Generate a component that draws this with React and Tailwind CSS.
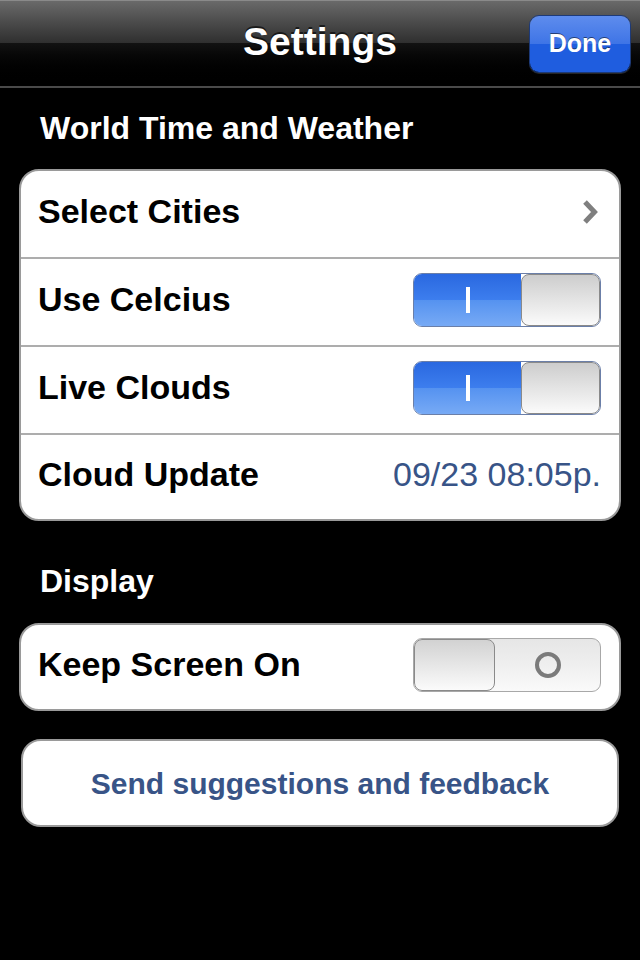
import React from "react";

const font = { fontFamily: '"Liberation Sans", Arial, Helvetica, sans-serif' };

function SwitchOn() {
  return (
    <div className="flex h-[54px] w-[188px] overflow-hidden rounded-[9px] border border-[#6b7fa8]">
      <div className="flex w-[107px] flex-col">
        <div className="flex h-1/2 items-end justify-center bg-gradient-to-b from-[#2a68e0] to-[#3d7eee]">
          <div className="h-[13px] w-[4px] bg-white" />
        </div>
        <div className="flex h-1/2 items-start justify-center bg-gradient-to-b from-[#5592f0] to-[#77aaf5]">
          <div className="h-[13px] w-[4px] bg-white" />
        </div>
      </div>
      <div className="flex-1 rounded-[8px] border border-[#8a8a8a] bg-gradient-to-b from-[#cdcdcd] to-[#fbfbfb]" />
    </div>
  );
}

function SwitchOff() {
  return (
    <div className="flex h-[54px] w-[188px] overflow-hidden rounded-[9px] border border-[#a8a8a8] bg-gradient-to-b from-[#e6e6e6] via-[#efefef] to-[#fafafa]">
      <div className="w-[81px] rounded-[8px] border border-[#8a8a8a] bg-gradient-to-b from-[#d2d2d2] to-[#fbfbfb]" />
      <div className="flex flex-1 items-center justify-center">
        <div className="h-[26px] w-[26px] rounded-full border-[4px] border-[#7b7b7b]" />
      </div>
    </div>
  );
}

function Row({ label, right, last, h = "h-[88px]" }) {
  return (
    <div
      className={
        "flex items-center justify-between pb-[5px] pl-[17px] pr-[18px] " +
        h +
        " " +
        (last ? "" : "border-b-2 border-[#adadad]")
      }
    >
      <span className="text-[34px] font-bold text-black">{label}</span>
      {right}
    </div>
  );
}

export default function App() {
  return (
    <div className="min-h-[960px] w-[640px] bg-black" style={font}>
      {/* Nav bar */}
      <div className="relative h-[88px] border-b-2 border-[#4a4a4a]">
        <div className="flex h-full flex-col">
          <div className="h-[44px] border-t border-[#8a8a8a] bg-gradient-to-b from-[#6a6a6a] to-[#2f2f2f]" />
          <div className="h-[44px] bg-gradient-to-b from-[#121212] to-[#000000]" />
        </div>
        <div className="absolute inset-0 flex items-center justify-center pb-[2px]">
          <span className="text-[39px] font-bold text-white [text-shadow:0_-2px_0_rgba(0,0,0,0.6)]">Settings</span>
        </div>
        <div className="absolute right-[9px] top-[15px] flex h-[58px] w-[102px] flex-col overflow-hidden rounded-[10px] border border-[#1d3a78] shadow-[0_1px_0_rgba(255,255,255,0.15)]">
          <div className="h-1/2 bg-gradient-to-b from-[#5e8ced] to-[#3e74e6]" />
          <div className="h-1/2 bg-[#1f5ddf]" />
          <span className="absolute inset-0 flex items-center justify-center text-[25px] font-bold text-white [text-shadow:0_-1px_0_rgba(0,0,0,0.5)]">
            Done
          </span>
        </div>
      </div>

      <div className="px-[19px]">
        <div className="flex h-[81px] items-center pl-[21px] pb-[2px]">
          <span className="text-[32px] font-bold text-white">World Time and Weather</span>
        </div>
        <div className="overflow-hidden rounded-[20px] border-2 border-[#9a9a9a] bg-white">
          <Row
            label="Select Cities"
            right={
              <svg width="18" height="26" viewBox="0 0 18 26" className="mr-[2px]">
                <path d="M4 3 L13.5 13 L4 23" fill="none" stroke="#7f7f7f" strokeWidth="5" />
              </svg>
            }
          />
          <Row label="Use Celcius" right={<SwitchOn />} />
          <Row label="Live Clouds" right={<SwitchOn />} />
          <Row
            label="Cloud Update"
            last
            h="h-[84px]"
            right={<span className="text-[34px] text-[#385487]">09/23 08:05p.</span>}
          />
        </div>

        <div className="flex h-[102px] items-center pl-[21px] pt-[18px]">
          <span className="text-[32px] font-bold text-white">Display</span>
        </div>
        <div className="overflow-hidden rounded-[20px] border-2 border-[#9a9a9a] bg-white">
          <Row label="Keep Screen On" last h="h-[84px]" right={<SwitchOff />} />
        </div>

        <div className="mx-[2px] mt-[28px] flex h-[88px] items-center justify-center rounded-[20px] border-2 border-[#9a9a9a] bg-white">
          <span className="text-[30px] font-bold text-[#385487]">Send suggestions and feedback</span>
        </div>
      </div>
    </div>
  );
}
